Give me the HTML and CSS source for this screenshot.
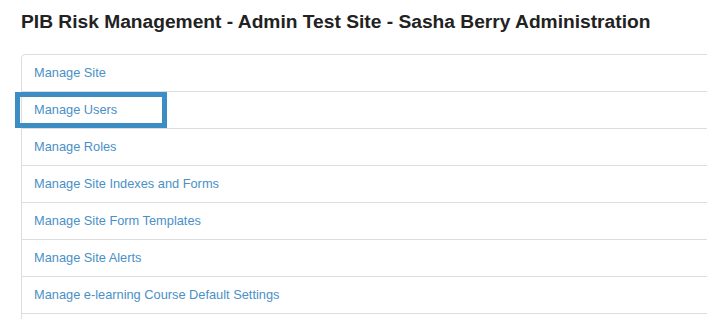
FILE: index.html
```html
<!DOCTYPE html>
<html lang="en">
<head>
  <meta charset="UTF-8">
  <meta name="viewport" content="width=device-width, initial-scale=1.0">
  <title>Site Administration</title>
  <link rel="stylesheet" href="styles.css">
</head>
<body>
  <div class="admin">
    <h1>PIB Risk Management - Admin Test Site - Sasha Berry Administration</h1>
    <div class="menu">
      <a class="menu-item" href="#">Manage Site</a>
      <a class="menu-item highlighted" href="#">Manage Users</a>
      <a class="menu-item" href="#">Manage Roles</a>
      <a class="menu-item" href="#">Manage Site Indexes and Forms</a>
      <a class="menu-item" href="#">Manage Site Form Templates</a>
      <a class="menu-item" href="#">Manage Site Alerts</a>
      <a class="menu-item" href="#">Manage e-learning Course Default Settings</a>
      <a class="menu-item" href="#">&nbsp;</a>
    </div>
  </div>
</body>
</html>
```

FILE: styles.css
```css
html, body {
  margin: 0;
  padding: 0;
  overflow: hidden;
  background: #fff;
}
body {
  font-family: "Liberation Sans", Arial, sans-serif;
  color: #333;
}
.admin {
  height: 319px;
  overflow: hidden;
  box-sizing: border-box;
  padding: 11px 0 0 21px;
}
.admin h1 {
  font-size: 19.2px;
  font-weight: bold;
  line-height: 22px;
  margin: 0 0 21px 0;
  color: #222;
}
.menu {
  width: 720px;
  display: flex;
  flex-direction: column;
}
.menu-item {
  display: block;
  position: relative;
  padding: 10px 12px;
  line-height: 16px;
  font-size: 12.8px;
  color: #4a90c8;
  text-decoration: none;
  border: 1px solid #ddd;
  margin-bottom: -1px;
  background: #fff;
}
.menu-item:first-child {
  border-top-left-radius: 4px;
}
.highlighted::after {
  content: "";
  position: absolute;
  left: -7px;
  top: 0;
  width: 142px;
  height: 26px;
  border: 5px solid #3b8dc4;
}
```
